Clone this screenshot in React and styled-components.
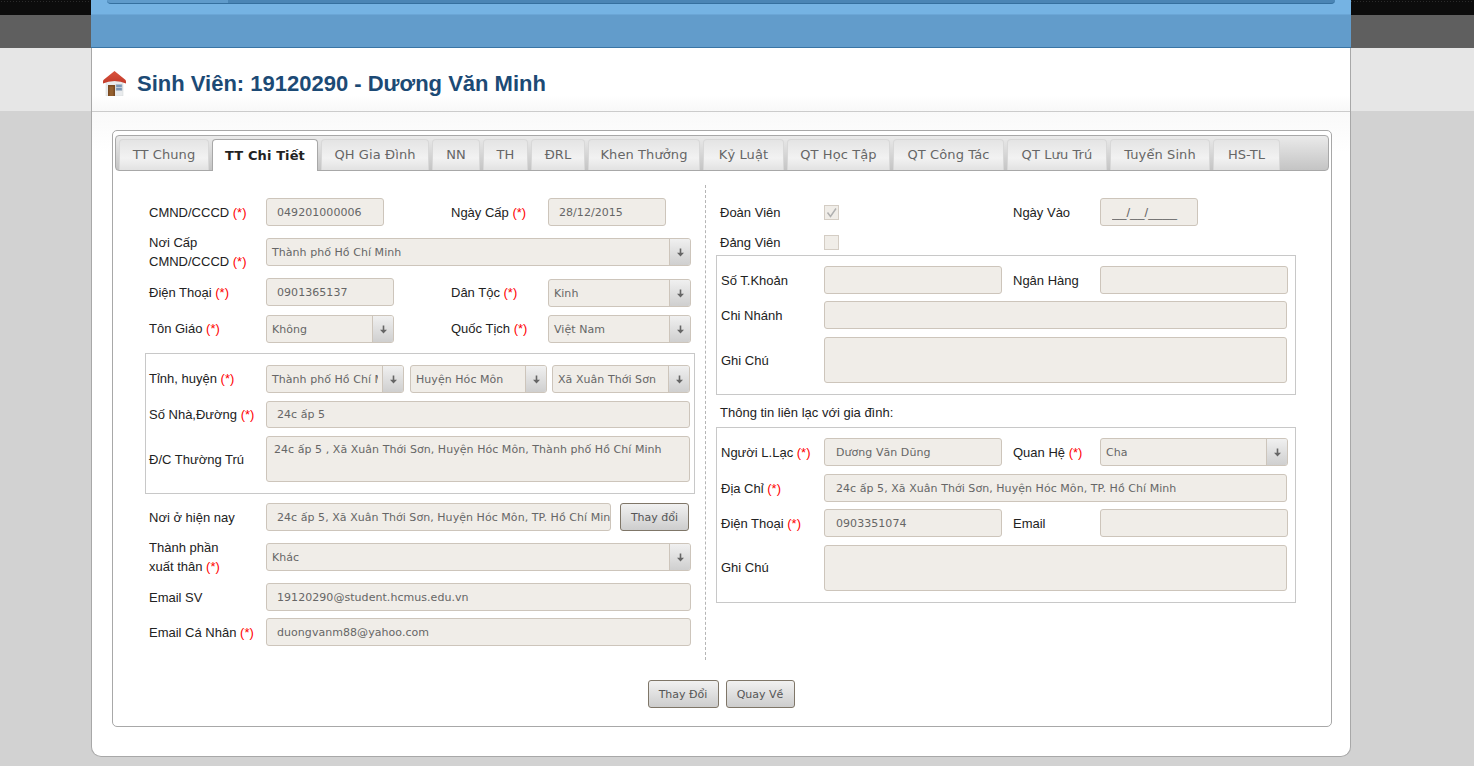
import React from 'react';
import styled, {createGlobalStyle} from 'styled-components';

const tabs = [
    {name: 'TT Chung', width: 90},
    {name: 'TT Chi Tiết', width: 106},
    {name: 'QH Gia Đình', width: 108},
    {name: 'NN', width: 48},
    {name: 'TH', width: 45},
    {name: 'ĐRL', width: 54},
    {name: 'Khen Thưởng', width: 112},
    {name: 'Kỷ Luật', width: 81},
    {name: 'QT Học Tập', width: 103},
    {name: 'QT Công Tác', width: 111},
    {name: 'QT Lưu Trú', width: 100},
    {name: 'Tuyển Sinh', width: 100},
    {name: 'HS-TL', width: 67},
];

const HouseIcon = () => (
    <svg width="23" height="25" viewBox="0 0 23 25">
        <defs>
            <linearGradient id="roof" x1="0" y1="0" x2="0" y2="1">
                <stop offset="0" stopColor="#d9543e"/>
                <stop offset="1" stopColor="#c23a2a"/>
            </linearGradient>
        </defs>
        <path d="M3 10h17v15H3z" fill="#e9ebed" stroke="#d2d4d6" strokeWidth="0.5"/>
        <path d="M11.500 0 22.300 8.800Q23 9.500 23 10.500V12.500Q18 10 11.500 10 5 10 0 12.500V10.500Q0 9.500.7 8.800z" fill="url(#roof)"/>
        <path d="M5 14h7v11H5z" fill="#7a4a22"/>
        <path d="M6.500 15.500h4V25h-4z" fill="#94602f"/>
        <path d="M13 13.500h6v6h-6z" fill="#7a97b8" stroke="#b4bcc6" strokeWidth="0.6"/>
        <path d="M13 16.500h6" stroke="#cfd8e2" strokeWidth="0.8"/>
    </svg>
);

const ArrowIcon = () => (
    <svg width="9" height="9" viewBox="0 0 9 9">
        <path d="M3.700 0.500h1.600v4.200H8L4.500 8.500 1 4.700h2.700z" fill="#666"/>
    </svg>
);

const Required = () => <Star> (*)</Star>;

const TextField = ({width, value, height, mask}) => (
    <Input $width={width} $height={height} $mask={mask} value={value || ''} readOnly />
);

const SelectField = ({width, value, gap, low}) => (
    <SelectBox $width={width} $gap={gap} $low={low}>
        <SelectText>{value}</SelectText>
        <SelectArrow><ArrowIcon /></SelectArrow>
    </SelectBox>
);

const App = () => {
    return (
        <Page>
            <GlobalStyle />
            <Card>
                <TopBar>
                    <TopStrip>
                        <NavBar><NavFirst /></NavBar>
                    </TopStrip>
                </TopBar>
                <TitleBar>
                    <HouseIcon />
                    <Title>Sinh Viên: 19120290 - Dương Văn Minh</Title>
                </TitleBar>
                <Content>
                    <Panel>
                        <TabBar>
                            {tabs.map((tab, index) => <Tab key={index} $width={tab.width} $active={index === 1}>{tab.name}</Tab>)}
                        </TabBar>
                        <FormArea>
                            <LeftCol>
                                <Row>
                                    <Label $width={117}>CMND/CCCD<Required /></Label>
                                    <TextField width={118} value="049201000006" />
                                    <Label $width={97} $gap={67}>Ngày Cấp<Required /></Label>
                                    <TextField width={118} value="28/12/2015" />
                                </Row>
                                <Row $top={12}>
                                    <Label $width={117} $tall>Nơi Cấp<br />CMND/CCCD<Required /></Label>
                                    <SelectField width={425} value="Thành phố Hồ Chí Minh" />
                                </Row>
                                <Row $top={12} $height={28}>
                                    <Label $width={117}>Điện Thoại<Required /></Label>
                                    <TextField width={128} value="0901365137" />
                                    <Label $width={97} $gap={57}>Dân Tộc<Required /></Label>
                                    <SelectField width={143} low value="Kinh" />
                                </Row>
                                <Row $top={9}>
                                    <Label $width={117} $lift>Tôn Giáo<Required /></Label>
                                    <SelectField width={128} value="Không" />
                                    <Label $width={97} $gap={57} $lift>Quốc Tịch<Required /></Label>
                                    <SelectField width={143} value="Việt Nam" />
                                </Row>
                                <AddressBox>
                                    <Row>
                                        <Label $width={117} $lift>Tỉnh, huyện<Required /></Label>
                                        <SelectField width={138} value="Thành phố Hồ Chí Minh" />
                                        <SelectField width={137} gap={6} value="Huyện Hóc Môn" />
                                        <SelectField width={138} gap={5} value="Xã Xuân Thới Sơn" />
                                    </Row>
                                    <Row $top={8}>
                                        <Label $width={117}>Số Nhà,Đường<Required /></Label>
                                        <TextField width={424} height={27} value="24c ấp 5" />
                                    </Row>
                                    <Row $top={8}>
                                        <Label $width={117}>Đ/C Thường Trú</Label>
                                        <TextArea $width={424} value="24c ấp 5 , Xã Xuân Thới Sơn, Huyện Hóc Môn, Thành phố Hồ Chí Minh" readOnly />
                                    </Row>
                                </AddressBox>
                                <Row $top={9}>
                                    <Label $width={117}>Nơi ở hiện nay</Label>
                                    <TextField width={345} value="24c ấp 5, Xã Xuân Thới Sơn, Huyện Hóc Môn, TP. Hồ Chí Minh" />
                                    <Button $width={69} $gap={9}>Thay đổi</Button>
                                </Row>
                                <Row $top={12}>
                                    <Label $width={117} $tall>Thành phần<br />xuất thân<Required /></Label>
                                    <SelectField width={425} value="Khác" />
                                </Row>
                                <Row $top={12}>
                                    <Label $width={117}>Email SV</Label>
                                    <TextField width={425} value="19120290@student.hcmus.edu.vn" />
                                </Row>
                                <Row $top={7}>
                                    <Label $width={117}>Email Cá Nhân<Required /></Label>
                                    <TextField width={425} value="duongvanm88@yahoo.com" />
                                </Row>
                            </LeftCol>
                            <RightCol>
                                <Row>
                                    <Label $width={104}>Đoàn Viên</Label>
                                    <CheckBox>
                                        <svg width="13" height="13" viewBox="0 0 13 13">
                                            <path d="M2.500 6.500 5.500 10.500 11 2.500" fill="none" stroke="#b0b0b0" strokeWidth="1.500"/>
                                        </svg>
                                    </CheckBox>
                                    <Label $width={87} $gap={174}>Ngày Vào</Label>
                                    <TextField width={98} mask value="__/__/____" />
                                </Row>
                                <Row $top={6} $height={20}>
                                    <Label $width={104}>Đảng Viên</Label>
                                    <CheckBox />
                                </Row>
                                <InfoBox $top={3}>
                                    <Row>
                                        <Label $width={103}>Số T.Khoản</Label>
                                        <TextField width={178} />
                                        <Label $width={87} $gap={11}>Ngân Hàng</Label>
                                        <TextField width={188} />
                                    </Row>
                                    <Row $top={7}>
                                        <Label $width={103}>Chi Nhánh</Label>
                                        <TextField width={463} />
                                    </Row>
                                    <Row $top={8}>
                                        <Label $width={103}>Ghi Chú</Label>
                                        <TextArea $width={463} readOnly />
                                    </Row>
                                </InfoBox>
                                <BoxHeading>Thông tin liên lạc với gia đình:</BoxHeading>
                                <InfoBox>
                                    <Row>
                                        <Label $width={103}>Người L.Lạc<Required /></Label>
                                        <TextField width={178} value="Dương Văn Dũng" />
                                        <Label $width={87} $gap={11}>Quan Hệ<Required /></Label>
                                        <SelectField width={188} value="Cha" />
                                    </Row>
                                    <Row $top={8}>
                                        <Label $width={103}>Địa Chỉ<Required /></Label>
                                        <TextField width={463} value="24c ấp 5, Xã Xuân Thới Sơn, Huyện Hóc Môn, TP. Hồ Chí Minh" />
                                    </Row>
                                    <Row $top={7}>
                                        <Label $width={103}>Điện Thoại<Required /></Label>
                                        <TextField width={178} value="0903351074" />
                                        <Label $width={87} $gap={11}>Email</Label>
                                        <TextField width={188} />
                                    </Row>
                                    <Row $top={8}>
                                        <Label $width={103} $lift>Ghi Chú</Label>
                                        <TextArea $width={463} readOnly />
                                    </Row>
                                </InfoBox>
                            </RightCol>
                        </FormArea>
                        <Actions>
                            <Button $width={71}>Thay Đổi</Button>
                            <Button $width={69}>Quay Về</Button>
                        </Actions>
                    </Panel>
                </Content>
            </Card>
        </Page>
    )
}

const GlobalStyle = createGlobalStyle`
    html, body {
        margin : 0;
        padding : 0;
    }
    body {
        overflow : hidden;
        font-family : "Liberation Sans", Arial, sans-serif;
    }
`;

const Page = styled.div`
    width : 1474px;
    height : 766px;
    overflow : hidden;
    background :
        linear-gradient(#5f5f5f, #5f5f5f) 0 15px / 100% 33px no-repeat,
        linear-gradient(#e6e6e6, #e6e6e6) 0 48px / 100% 63px no-repeat,
        radial-gradient(#2b2b2b 0.7px, transparent 0.8px) 0 0 / 3px 3px repeat-x,
        linear-gradient(#0c0c0c, #0c0c0c) 0 0 / 100% 15px no-repeat,
        #d2d2d2;
`;
const Card = styled.div`
    width : 1260px;
    height : 757px;
    margin-left : 91px;
    box-sizing : border-box;
    background : #fff;
    border : 1px solid #a8a8a8;
    border-top : none;
    border-radius : 0 0 10px 10px;
`;
const TopBar = styled.div`
    height : 48px;
    margin : 0 -1px;
    box-sizing : border-box;
    background : #629ccb;
    border-bottom : 1px solid #3a75a5;
`;
const TopStrip = styled.div`
    height : 15px;
    padding : 0 16px;
    box-sizing : border-box;
    background : #75b3e3;
    border-bottom : 1px solid #6ba6d6;
`;
const NavBar = styled.div`
    height : 4px;
    background : #4a85b5;
    border-bottom : 1px solid #35709f;
    border-radius : 0 0 8px 8px;
    overflow : hidden;
    box-sizing : border-box;
`;
const NavFirst = styled.div`
    width : 121px;
    height : 100%;
    background : #5f9bcb;
`;
const TitleBar = styled.div`
    height : 64px;
    padding : 8px 0 0 11px;
    box-sizing : border-box;
    display : flex;
    align-items : center;
    gap : 11px;
    background : linear-gradient(#fff 75%, #f8f8f8);
    border-bottom : 1px solid #cbcbcb;
`;
const Title = styled.h1`
    margin : 0;
    font-size : 22px;
    font-weight : bold;
    color : #1c4a75;
`;
const Content = styled.div`
    padding : 18px 18px 0 20px;
    background : linear-gradient(#f9f9f9, #fff 40px);
`;
const Panel = styled.div`
    width : 1220px;
    height : 597px;
    box-sizing : border-box;
    background : #fff;
    border : 1px solid #a8a8a8;
    border-radius : 5px;
    padding : 4px 2px 0;
`;
const TabBar = styled.div`
    height : 36px;
    box-sizing : border-box;
    display : flex;
    align-items : flex-end;
    gap : 3px;
    padding-left : 3px;
    background : linear-gradient(#eaeaea, #c4c4c4);
    border : 1px solid #a8a8a8;
    border-radius : 4px;
`;
const Tab = styled.div`
    width : ${props => props.$width}px;
    height : ${props => props.$active ? 32 : 31}px;
    margin-bottom : ${props => props.$active ? -1 : 0}px;
    padding-bottom : 1px;
    box-sizing : border-box;
    display : flex;
    align-items : center;
    justify-content : center;
    white-space : nowrap;
    font-family : "DejaVu Sans", sans-serif;
    font-size : 13px;
    letter-spacing : .1px;
    font-weight : ${props => props.$active ? 'bold' : 'normal'};
    color : ${props => props.$active ? '#222' : '#666'};
    background : ${props => props.$active ? '#fff' : 'linear-gradient(#e4e4e4, #f2f2f2 60%, #e2e2e2)'};
    border : 1px solid ${props => props.$active ? '#a8a8a8' : '#d8d8d8'};
    border-bottom : none;
    border-radius : 4px 4px 0 0;
`;
const FormArea = styled.div`
    display : flex;
    margin-top : 14px;
`;
const LeftCol = styled.div`
    width : 591px;
    height : 475px;
    padding : 13px 0 0 34px;
    box-sizing : border-box;
    border-right : 1px dashed #b5b5b5;
`;
const Row = styled.div`
    display : flex;
    align-items : center;
    margin-top : ${props => props.$top || 0}px;
    ${props => props.$height ? `height : ${props.$height}px;` : ''}
`;
const Label = styled.div`
    width : ${props => props.$width}px;
    margin : ${props => props.$tall ? '-5px' : '0'} 0 ${props => props.$tall ? '-5px' : props.$lift ? '2px' : '0'} ${props => props.$gap || 0}px;
    flex : none;
    font-size : 13px;
    line-height : 19px;
    color : #222;
`;
const Star = styled.span`
    color : #f00;
`;
const Input = styled.input`
    width : ${props => props.$width}px;
    height : ${props => props.$height || 28}px;
    flex : none;
    box-sizing : border-box;
    padding : 0 0 0 10px;
    font-family : ${props => props.$mask ? '"Liberation Sans", Arial' : '"DejaVu Sans"'}, sans-serif;
    font-size : ${props => props.$mask ? 13 : 11}px;
    letter-spacing : ${props => props.$mask ? 0 : '.05px'};
    color : #666;
    background : #f0ede8;
    border : 1px solid #cdc5bb;
    border-radius : 3px;
    outline : none;
`;
const RightCol = styled.div`
    padding : 13px 0 0 14px;
    ${Input} {
        padding-left : 11px;
    }
`;
const TextArea = styled.textarea`
    width : ${props => props.$width}px;
    height : 46px;
    flex : none;
    display : block;
    box-sizing : border-box;
    padding : 5px 7px;
    resize : none;
    font-family : "DejaVu Sans", sans-serif;
    font-size : 11px;
    letter-spacing : .05px;
    line-height : 15px;
    color : #666;
    background : #f0ede8;
    border : 1px solid #cdc5bb;
    border-radius : 3px;
    outline : none;
`;
const SelectBox = styled.div`
    width : ${props => props.$width}px;
    height : 28px;
    margin-left : ${props => props.$gap || 0}px;
    margin-top : ${props => props.$low ? 2 : 0}px;
    flex : none;
    box-sizing : border-box;
    display : flex;
    background : #f0ede8;
    border : 1px solid #cdc5bb;
    border-radius : 3px;
    overflow : hidden;
`;
const SelectText = styled.div`
    flex : 1;
    min-width : 0;
    padding-left : 5px;
    margin-right : 4px;
    overflow : hidden;
    white-space : nowrap;
    line-height : 27px;
    font-family : "DejaVu Sans", sans-serif;
    font-size : 11px;
    letter-spacing : .05px;
    color : #666;
`;
const SelectArrow = styled.div`
    width : 20px;
    flex : none;
    display : flex;
    align-items : center;
    justify-content : center;
    background : linear-gradient(#f0f0f0, #cfcfcf);
    border-left : 1px solid #cdc5bb;
`;
const AddressBox = styled.div`
    width : 550px;
    height : 141px;
    margin : 10px 0 0 -4px;
    padding : 11px 0 0 3px;
    box-sizing : border-box;
    border : 1px solid #c8c8c8;
`;
const InfoBox = styled.div`
    width : 580px;
    margin : ${props => props.$top || 0}px 0 0 -4px;
    padding : 10px 0 11px 4px;
    box-sizing : border-box;
    border : 1px solid #c8c8c8;
`;
const BoxHeading = styled.div`
    height : 32px;
    line-height : 36px;
    font-size : 13px;
    color : #222;
`;
const CheckBox = styled.div`
    width : 15px;
    height : 15px;
    flex : none;
    box-sizing : border-box;
    display : flex;
    align-items : center;
    justify-content : center;
    background : #f0ede8;
    border : 1px solid #d4cdc4;
`;
const Button = styled.div`
    width : ${props => props.$width}px;
    height : 28px;
    margin-left : ${props => props.$gap || 0}px;
    flex : none;
    box-sizing : border-box;
    display : flex;
    align-items : center;
    justify-content : center;
    font-family : "DejaVu Sans", sans-serif;
    font-size : 11px;
    color : #555;
    background : linear-gradient(#f1f1f1, #cdcdcd);
    border : 1px solid #7f7668;
    border-radius : 3px;
`;
const Actions = styled.div`
    display : flex;
    justify-content : center;
    gap : 7px;
    margin-top : 20px;
    padding-right : 2px;
`;

export default App;
